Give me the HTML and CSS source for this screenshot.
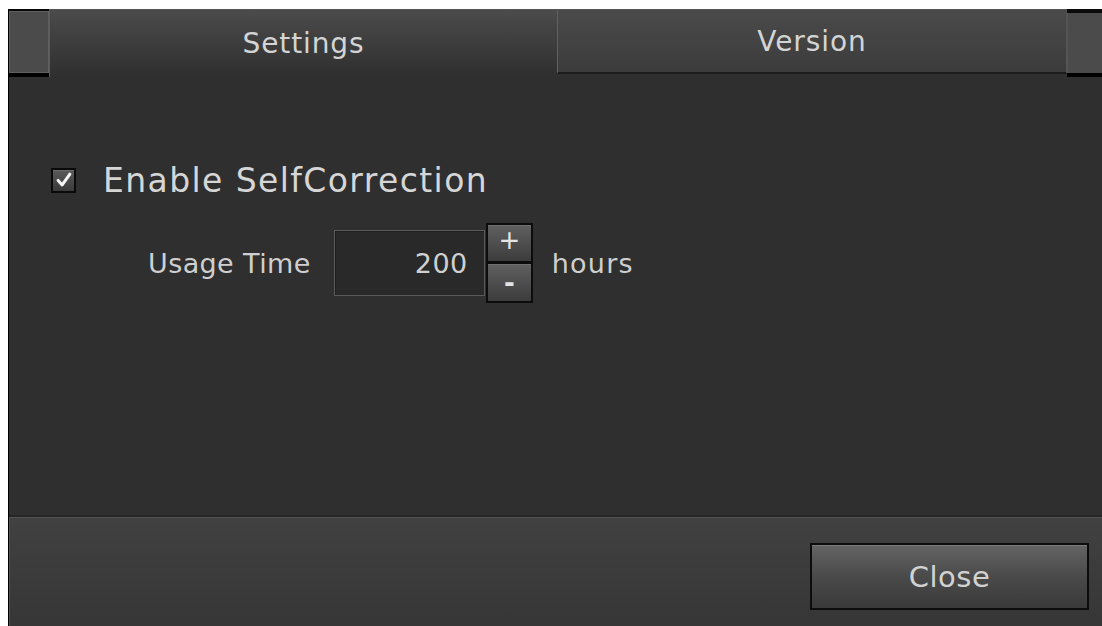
FILE: index.html
```html
<!DOCTYPE html>
<html lang="en">
<head>
<meta charset="utf-8">
<title>Settings</title>
<link rel="stylesheet" href="styles.css">
</head>
<body>
<div class="screen">
  <div class="window">
    <div class="tabbar">
      <div class="tab-stub tab-stub-left"></div>
      <div class="tab tab-active">Settings</div>
      <div class="tab tab-inactive">Version</div>
      <div class="tab-stub tab-stub-right"></div>
    </div>
    <div class="content">
      <div class="check-row">
        <span class="checkbox">
          <svg viewBox="0 0 20 20" width="18" height="18"><path d="M3.5 10.5 L8 15.5 L16.5 3.5" fill="none" stroke="#f4f4f4" stroke-width="3.4" stroke-linecap="round" stroke-linejoin="round"/></svg>
        </span>
        <span class="check-label">Enable SelfCorrection</span>
      </div>
      <div class="field-row">
        <span class="field-label">Usage Time</span>
        <div class="spin">
          <div class="spin-input">200</div>
          <div class="spin-buttons">
            <div class="spin-btn spin-up">+</div>
            <div class="spin-btn spin-down">-</div>
          </div>
        </div>
        <span class="unit">hours</span>
      </div>
    </div>
    <div class="footer">
      <div class="btn">Close</div>
    </div>
  </div>
</div>
</body>
</html>
```

FILE: styles.css
```css
html, body {
  margin: 0;
  padding: 0;
  background: #ffffff;
  overflow: hidden;
}

.screen {
  box-sizing: border-box;
  width: 1102px;
  height: 626px;
  padding: 9px 0 0 8px;
  font-family: "DejaVu Sans", "Liberation Sans", sans-serif;
  color: #d2d2d2;
}

.window {
  box-sizing: border-box;
  height: 617px;
  display: flex;
  flex-direction: column;
  background: #2f2f2f;
  border-left: 1px solid #000;
}

/* ---- tab strip ---- */
.tabbar {
  display: flex;
  align-items: flex-start;
  height: 68px;
  flex: none;
}

.tab-stub {
  box-sizing: border-box;
  background: #4b4b4b;
  border-top: 2px solid #080808;
  border-bottom: 4px solid #000;
  box-shadow: inset 1px 1px 0 #5f5f5f, inset -1px -1px 0 #5f5f5f;
}

.tab-stub-left {
  width: 40px;
  height: 68px;
}

.tab-stub-right {
  flex: 1;
  height: 68px;
  border-top: 4px solid #0a0a0a;
  box-shadow: inset 1px 0 0 #555;
}

.tab {
  box-sizing: border-box;
  display: flex;
  align-items: center;
  justify-content: center;
  font-size: 28px;
  color: #d4d4d4;
  letter-spacing: 0.9px;
}

.tab-active {
  width: 508px;
  height: 68px;
  background: linear-gradient(#4b4b4b, #3a3a3a 60%, #2f2f2f);
  border-left: 1px solid #5c5c5c;
  border-top: 1px solid #555;
}

.tab-inactive {
  width: 510px;
  height: 65px;
  background: linear-gradient(#4a4a4a, #3c3c3c);
  border-left: 1px solid #616161;
  border-right: 1px solid #545454;
  border-top: 1px solid #555;
  border-bottom: 2px solid #1c1c1c;
}

/* ---- settings page ---- */
.content {
  flex: 1;
  display: flex;
  flex-direction: column;
  padding-top: 88px;
}

.check-row {
  display: flex;
  align-items: center;
  height: 30px;
  margin-left: 42px;
  gap: 27px;
}

.checkbox {
  box-sizing: border-box;
  width: 25px;
  height: 25px;
  display: flex;
  align-items: center;
  justify-content: center;
  border: 2px solid #0a0a0a;
  background: linear-gradient(#5a5a5a, #3a3a3a);
  box-shadow: inset 0 1px 0 #6a6a6a;
}

.check-label {
  font-size: 33px;
  color: #d6d6d6;
  line-height: 1;
  letter-spacing: 1.4px;
}

.field-row {
  display: flex;
  align-items: center;
  margin-top: 28px;
  margin-left: 139px;
  height: 80px;
}

.field-label,
.unit {
  font-size: 27px;
  color: #cfcfcf;
}

.field-label {
  letter-spacing: 0.4px;
}

.spin {
  display: flex;
  align-items: center;
  margin-left: 23px;
}

.spin-input {
  box-sizing: border-box;
  width: 151px;
  height: 66px;
  display: flex;
  align-items: center;
  justify-content: flex-end;
  padding-right: 16px;
  font-size: 27px;
  letter-spacing: 0.5px;
  color: #d0d0d0;
  background: #292929;
  border: 1px solid #5a5a5a;
  box-shadow: inset 1px 1px 0 #1f1f1f;
}

.spin-buttons {
  display: flex;
  flex-direction: column;
  margin-left: 1px;
}

.spin-btn {
  box-sizing: border-box;
  width: 47px;
  display: flex;
  align-items: center;
  justify-content: center;
  font-size: 26px;
  color: #e4e4e4;
  border: 2px solid #0c0c0c;
  background: linear-gradient(#606060, #3c3c3c);
  box-shadow: inset 0 1px 0 #707070;
}

.spin-up {
  height: 40px;
  padding-bottom: 6px;
}

.spin-down {
  height: 41px;
  margin-top: -1px;
  font-weight: bold;
}

.unit {
  margin-left: 19px;
  letter-spacing: 1.2px;
}

/* ---- footer ---- */
.footer {
  box-sizing: border-box;
  flex: none;
  height: 111px;
  display: flex;
  justify-content: flex-end;
  align-items: flex-start;
  padding: 26px 13px 0 0;
  background: linear-gradient(#414141, #363636);
  border-top: 2px solid #262626;
  box-shadow: inset 1px 1px 0 #525252;
}

.btn {
  box-sizing: border-box;
  width: 279px;
  height: 67px;
  display: flex;
  align-items: center;
  justify-content: center;
  font-size: 29px;
  color: #d2d2d2;
  letter-spacing: 0.5px;
  border: 2px solid #0c0c0c;
  background: linear-gradient(#646464, #4a4a4a 50%, #3a3a3a);
  box-shadow: inset 0 1px 0 #7a7a7a;
}
```
